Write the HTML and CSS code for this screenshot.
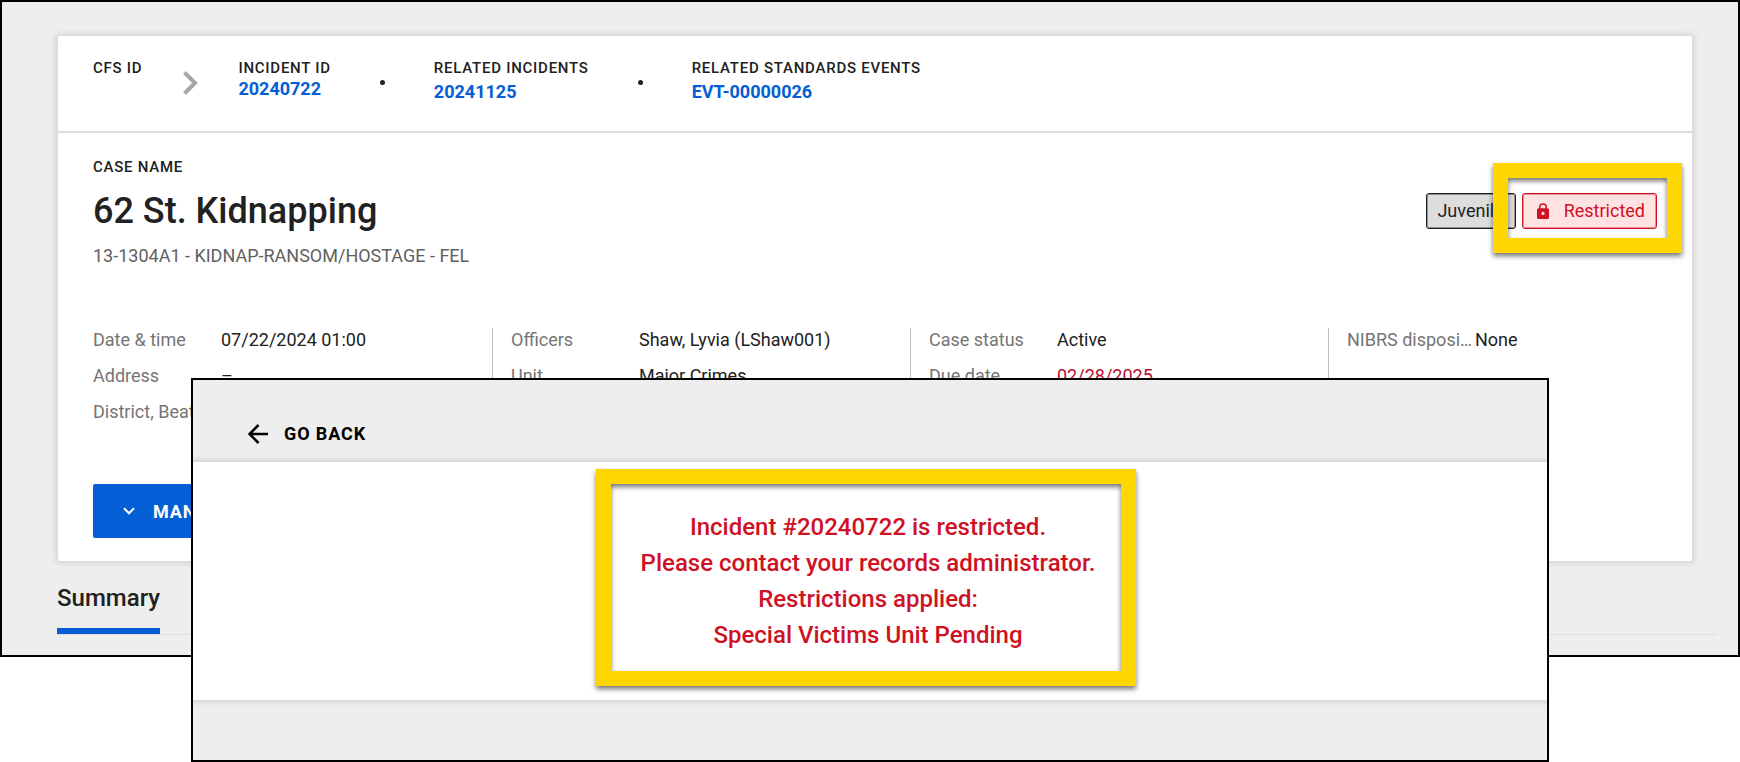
FILE: index.html
```
<!DOCTYPE html>
<html lang="en">
<head>
<meta charset="utf-8">
<title>62 St. Kidnapping</title>
<link rel="stylesheet" href="styles.css">
</head>
<body>
<main class="case-page">
  <section class="card">
    <nav class="related" aria-label="Related records">
      <div class="related-item"><span class="label">CFS ID</span></div>
      <svg class="crumb-arrow" width="16" height="26" viewBox="0 0 16 26" aria-hidden="true"><path d="M2.500 2.500L13 13L2.500 23.500" fill="none" stroke="#a6a6a6" stroke-width="4"/></svg>
      <div class="related-item"><span class="label">INCIDENT ID</span><a class="link" href="#">20240722</a></div>
      <span class="dot"></span>
      <div class="related-item spaced"><span class="label">RELATED INCIDENTS</span><a class="link" href="#">20241125</a></div>
      <span class="dot"></span>
      <div class="related-item spaced"><span class="label">RELATED STANDARDS EVENTS</span><a class="link" href="#">EVT-00000026</a></div>
    </nav>
    <div class="case">
      <span class="label">CASE NAME</span>
      <div class="title-row">
        <h1 class="title">62 St. Kidnapping</h1>
        <div class="tags">
          <span class="tag">Juvenile</span>
          <div class="highlighted">
            <span class="tag tag-restricted">
              <svg width="12" height="16" viewBox="0 0 12 16" aria-hidden="true"><path d="M2.700 6V4.200a3.300 3.300 0 0 1 6.600 0V6" fill="none" stroke="#cf1124" stroke-width="1.500"/><path fill="#cf1124" fill-rule="evenodd" d="M1.500 5.300h9A1.500 1.500 0 0 1 12 6.800v7.700a1.500 1.500 0 0 1-1.500 1.500h-9A1.500 1.500 0 0 1 0 14.500V6.800A1.500 1.500 0 0 1 1.500 5.300zM6 8.700a1.700 1.700 0 1 0 0 3.400a1.700 1.700 0 0 0 0-3.400z"/></svg>
              Restricted
            </span>
            <span class="ring ring-tag"></span>
          </div>
        </div>
      </div>
      <p class="offense">13-1304A1 - KIDNAP-RANSOM/HOSTAGE - FEL</p>
      <div class="facts">
        <dl class="fact-list">
          <dt>Date &amp; time</dt><dd>07/22/2024 01:00</dd>
          <dt>Address</dt><dd>–</dd>
          <dt>District, Beat</dt><dd>–</dd>
        </dl>
        <dl class="fact-list">
          <dt>Officers</dt><dd>Shaw, Lyvia (LShaw001)</dd>
          <dt>Unit</dt><dd>Major Crimes</dd>
        </dl>
        <dl class="fact-list">
          <dt>Case status</dt><dd>Active</dd>
          <dt>Due date</dt><dd class="overdue">02/28/2025</dd>
        </dl>
        <dl class="fact-list">
          <dt>NIBRS disposition</dt><dd>None</dd>
        </dl>
      </div>
      <button class="manage" type="button">
        <svg width="12" height="8" viewBox="0 0 12 8" aria-hidden="true"><path d="M1 1.300L6 6.300L11 1.300" fill="none" stroke="#fff" stroke-width="2"/></svg>
        MANAGE
      </button>
    </div>
  </section>
  <div class="tabs" role="tablist">
    <button class="tab" type="button" role="tab" aria-selected="true">Summary</button>
  </div>
</main>
<section class="notice">
  <header class="notice-bar">
    <button class="back" type="button">
      <svg width="20" height="20" viewBox="0 0 20 20" aria-hidden="true"><path d="M20 10H1.500M10.500 1L1.500 10L10.500 19" fill="none" stroke="#000" stroke-width="2.500"/></svg>
      GO BACK
    </button>
  </header>
  <div class="notice-body">
    <div class="highlighted">
      <p class="message">Incident #20240722 is restricted.<br>Please contact your records administrator.<br>Restrictions applied:<br>Special Victims Unit Pending</p>
      <span class="ring ring-message"></span>
    </div>
  </div>
</section>
</body>
</html>
```
FILE: styles.css
```
* { box-sizing: border-box; }
body {
  margin: 0;
  background: #fff;
  color: #212121;
  font: 18px/24px Roboto, "Liberation Sans", sans-serif;
}
h1, p, dl, dd { margin: 0; }
button {
  border: 0;
  background: none;
  font-family: inherit;
  cursor: pointer;
}

.case-page {
  background: #eee;
  border: 2px solid #000;
  padding: 34px 21px 20px 55px;
}
.card {
  margin: 0 25px 0 1px;
  background: #fff;
  border-radius: 2px;
  box-shadow: 0 0 6px 2px rgba(0, 0, 0, .12);
}

.related {
  display: flex;
  align-items: flex-start;
  padding: 22px 35px 28px;
  border-bottom: 2px solid #ddd;
}
.related-item {
  display: flex;
  flex-direction: column;
}
.spaced { gap: 3px; }
.label {
  display: block;
  font-size: 15px;
  line-height: 20px;
  font-weight: 500;
  letter-spacing: .05em;
}
.link {
  color: #045ed5;
  font-weight: 700;
  line-height: 22px;
  text-decoration: none;
}
.crumb-arrow { margin: 12px 40px 0; }
.dot {
  width: 5px;
  height: 5px;
  margin: 22px 49px 0;
  border-radius: 50%;
  background: #212121;
}

.case { padding: 24px 35px 23px; }
.title-row {
  display: flex;
  align-items: center;
  justify-content: space-between;
  margin-top: 12px;
}
.title {
  font-size: 36px;
  line-height: 44px;
  font-weight: 500;
}
.tags {
  display: flex;
  gap: 6px;
}
.tag {
  display: flex;
  align-items: center;
  height: 36px;
  padding: 0 11px 0 10px;
  border: 1px solid #212121;
  border-radius: 3px;
  background: #ddd;
  box-shadow: inset 0 0 0 1px rgba(33, 33, 33, .4);
}
.tag-restricted {
  gap: 15px;
  padding: 0 11px 0 14px;
  border-color: #cf1124;
  background: #ffe3e3;
  box-shadow: inset 0 0 0 1px rgba(207, 17, 36, .4);
  color: #cf1124;
}
.highlighted { position: relative; }
.ring {
  position: absolute;
  border: 15px solid #ffd700;
  box-shadow: 0 3px 5px rgba(0, 0, 0, .55), inset 0 3px 5px rgba(0, 0, 0, .55);
  pointer-events: none;
}
.ring-tag { inset: -30px -25px -24px -29px; }
.ring-message { inset: -40px -41px -33px -45px; }

.offense {
  margin-top: 11px;
  color: #616161;
}
.facts {
  display: grid;
  grid-template-columns: 399fr 418fr 418fr 329fr;
  margin-top: 60px;
}
.fact-list {
  display: grid;
  grid-template-columns: 128px 1fr;
  grid-auto-rows: 24px;
  gap: 12px 0;
  padding-left: 18px;
  border-left: 1px solid #bdbdbd;
}
.fact-list:first-child {
  padding-left: 0;
  border-left: 0;
}
dt {
  overflow: hidden;
  color: #757575;
  text-overflow: ellipsis;
  white-space: nowrap;
}
.overdue { color: #ba0c2f; }
.manage {
  display: flex;
  align-items: center;
  gap: 18px;
  height: 54px;
  margin-top: 60px;
  padding: 0 30px;
  border-radius: 2px;
  background: #045ed5;
  color: #fff;
  font-size: 18px;
  font-weight: 700;
  letter-spacing: .05em;
}

.tabs {
  display: flex;
  margin-top: 20px;
  border-bottom: 1px solid #ddd;
}
.tab {
  padding: 0 0 12px;
  border-bottom: 6px solid #045ed5;
  color: #212121;
  font-size: 24px;
  line-height: 35px;
  font-weight: 500;
}

.notice {
  position: relative;
  margin: -279px 191px 0;
  border: 2px solid #000;
  background: #eee;
  padding-bottom: 60px;
}
.notice-bar { padding: 42px 55px 16px; }
.back {
  display: flex;
  align-items: center;
  gap: 16px;
  padding: 0;
  color: #000;
  font-size: 18px;
  line-height: 24px;
  font-weight: 700;
  letter-spacing: .05em;
}
.notice-body {
  display: flex;
  justify-content: center;
  padding: 47px 4px 47px 0;
  background: #fff;
  box-shadow: 0 0 6px 2px rgba(0, 0, 0, .12);
  clip-path: inset(-8px 0);
}
.message {
  color: #cf1124;
  font-size: 24px;
  line-height: 36px;
  font-weight: 500;
  text-align: center;
}
```
